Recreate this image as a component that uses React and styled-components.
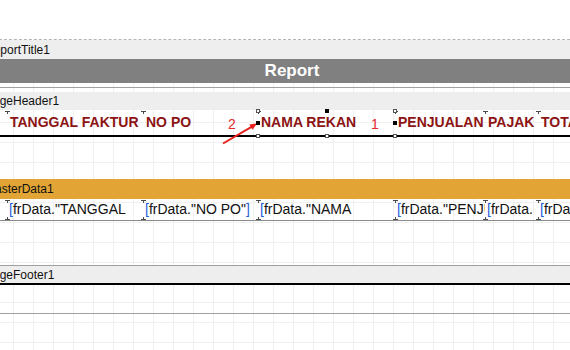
import styled, { createGlobalStyle } from 'styled-components'

const GlobalStyle = createGlobalStyle`
  html, body {
    margin: 0;
    padding: 0;
    background: #fff;
    overflow: hidden;
  }
  body {
    font-family: "Liberation Sans", Arial, sans-serif;
  }
`

const Viewport = styled.div`
  width: 570px;
  height: 350px;
  overflow: hidden;
  background: #fff;
`

const Page = styled.div`
  position: relative;
  width: 616px;
  margin-left: -16px;
  display: flex;
  flex-direction: column;
`

const TopMargin = styled.div`
  height: 39px;
  border-bottom: 1px dashed #b4b4b4;
`

const Sheet = styled.div`
  display: flex;
  flex-direction: column;
  min-height: 320px;
  background-image:
    linear-gradient(to right, #f0f0f0 1px, transparent 1px),
    linear-gradient(to bottom, #f0f0f0 1px, transparent 1px);
  background-size: 20px 20px;
  background-position: 9px 2px;
`

const Caption = styled.div`
  height: ${p => p.$h}px;
  display: flex;
  align-items: center;
  padding-left: 1px;
  font-size: 12px;
  color: #111;
  background: ${p => p.$color || '#eeeeee'};
  border-top: ${p => (p.$line ? '1px solid #a0a0a0' : 'none')};
`

const Gap = styled.div`
  height: ${p => p.$h}px;
`

const TitleBand = styled.div`
  height: 28px;
  border-bottom: 1px solid #a0a0a0;
`

const TitleBar = styled.div`
  height: 24px;
  background: #808080;
  color: #fff;
  font-weight: bold;
  font-size: 17px;
  display: flex;
  align-items: center;
  justify-content: center;
`

const ObjRow = styled.div`
  display: flex;
  padding-left: 23px;
  height: ${p => p.$h}px;
  border-bottom: ${p => p.$bottom || 'none'};
`

const Cell = styled.div`
  position: relative;
  flex: 0 0 ${p => p.$w}px;
  width: ${p => p.$w}px;
  min-width: 0;
  box-sizing: border-box;

  &::before,
  &::after {
    content: '';
    position: absolute;
    left: -2px;
    width: 5px;
    height: 3px;
  }
  &::before {
    top: 1px;
    background:
      linear-gradient(#4a4a4a, #4a4a4a) top / 100% 1px no-repeat,
      linear-gradient(#4a4a4a, #4a4a4a) center / 1px 100% no-repeat;
  }
  &::after {
    display: ${p => (p.$noBottom ? 'none' : 'block')};
    bottom: 0;
    background:
      linear-gradient(#4a4a4a, #4a4a4a) bottom / 100% 1px no-repeat,
      linear-gradient(#4a4a4a, #4a4a4a) center / 1px 100% no-repeat;
  }
`

const HeadText = styled.div`
  padding-left: 3px;
  font-size: 14px;
  font-weight: bold;
  color: #8c1414;
  line-height: 25px;
  white-space: nowrap;
  overflow: hidden;
`

const DataText = styled.div`
  padding-left: 2px;
  font-size: 14px;
  color: #111;
  line-height: 21px;
  height: 21px;
  overflow: hidden;
`

const Bracket = styled.span`
  color: #1f5fdc;
`

const Handle = styled.span`
  position: absolute;
  left: calc(${p => p.$x} - 2px);
  top: ${p => p.$y}px;
  width: 4px;
  height: 4px;
  box-sizing: border-box;
  border: 1px solid ${p => (p.$filled ? '#000' : '#555')};
  background: ${p => (p.$filled ? '#000' : '#fff')};
  z-index: 2;
`

const Overlay = styled.div`
  position: absolute;
  inset: 0;
  pointer-events: none;
`

const Mark = styled.span`
  position: absolute;
  left: ${p => p.$x}px;
  top: ${p => p.$y}px;
  font-size: 14px;
  color: #e32b2b;
  line-height: 16px;
`

const Arrow = styled.svg`
  position: absolute;
  left: 0;
  top: 0;
`

const FooterBand = styled.div`
  height: 28px;
  border-top: 2px solid #000;
  border-bottom: 1px solid #a0a0a0;
`

const columns = [
  { w: 136, head: 'TANGGAL FAKTUR', data: 'TANGGAL FAKTUR' },
  { w: 115, head: 'NO PO', data: 'NO PO' },
  { w: 137, head: 'NAMA REKAN', data: 'NAMA REKAN', selected: true },
  { w: 90, head: 'PENJUALAN', data: 'PENJUALAN' },
  { w: 53, head: 'PAJAK', data: 'PAJAK', breakDot: true },
  { w: 85, head: 'TOTAL', data: 'TOTAL', breakDot: true },
]

const handles = [
  { x: '0px', y: -1, filled: false },
  { x: '50%', y: -1, filled: true },
  { x: '100%', y: -1, filled: false },
  { x: '0px', y: 11, filled: true },
  { x: '100%', y: 11, filled: true },
  { x: '0px', y: 24, filled: false },
  { x: '50%', y: 24, filled: false },
  { x: '100%', y: 24, filled: false },
]

export default function App() {
  return (
    <Viewport>
      <GlobalStyle />
      <Page>
        <TopMargin />
        <Sheet>
          <Caption $h={19}>ReportTitle1</Caption>
          <TitleBand>
            <TitleBar>Report</TitleBar>
          </TitleBand>
          <Gap $h={4} />

          <Caption $h={18}>PageHeader1</Caption>
          <ObjRow $h={25} $bottom="2px solid #000">
            {columns.map(c => (
              <Cell key={c.head} $w={c.w} $noBottom>
                <HeadText>{c.head}</HeadText>
                {c.selected &&
                  handles.map((h, i) => (
                    <Handle key={i} $x={h.x} $y={h.y} $filled={h.filled} />
                  ))}
              </Cell>
            ))}
          </ObjRow>
          <Gap $h={42} />

          <Caption $h={20} $color="#e2a535">MasterData1</Caption>
          <ObjRow $h={21} $bottom="1px solid #8a8a8a">
            {columns.map(c => (
              <Cell key={c.data} $w={c.w}>
                <DataText>
                  <Bracket>[</Bracket>frData.{c.breakDot && <wbr />}"{c.data}"<Bracket>]</Bracket>
                </DataText>
              </Cell>
            ))}
          </ObjRow>
          <Gap $h={44} />

          <Caption $h={17} $line>PageFooter1</Caption>
          <FooterBand />
        </Sheet>

        <Overlay>
          <Mark $x={244} $y={116}>2</Mark>
          <Mark $x={387} $y={116}>1</Mark>
          <Arrow width="616" height="350" viewBox="0 0 616 350">
            <line x1="239" y1="143.5" x2="268" y2="126.6" stroke="#e8201c" strokeWidth="2" />
            <polygon points="273,123.5 268.5,129.8 265.3,124.4" fill="#e8201c" />
          </Arrow>
        </Overlay>
      </Page>
    </Viewport>
  )
}
